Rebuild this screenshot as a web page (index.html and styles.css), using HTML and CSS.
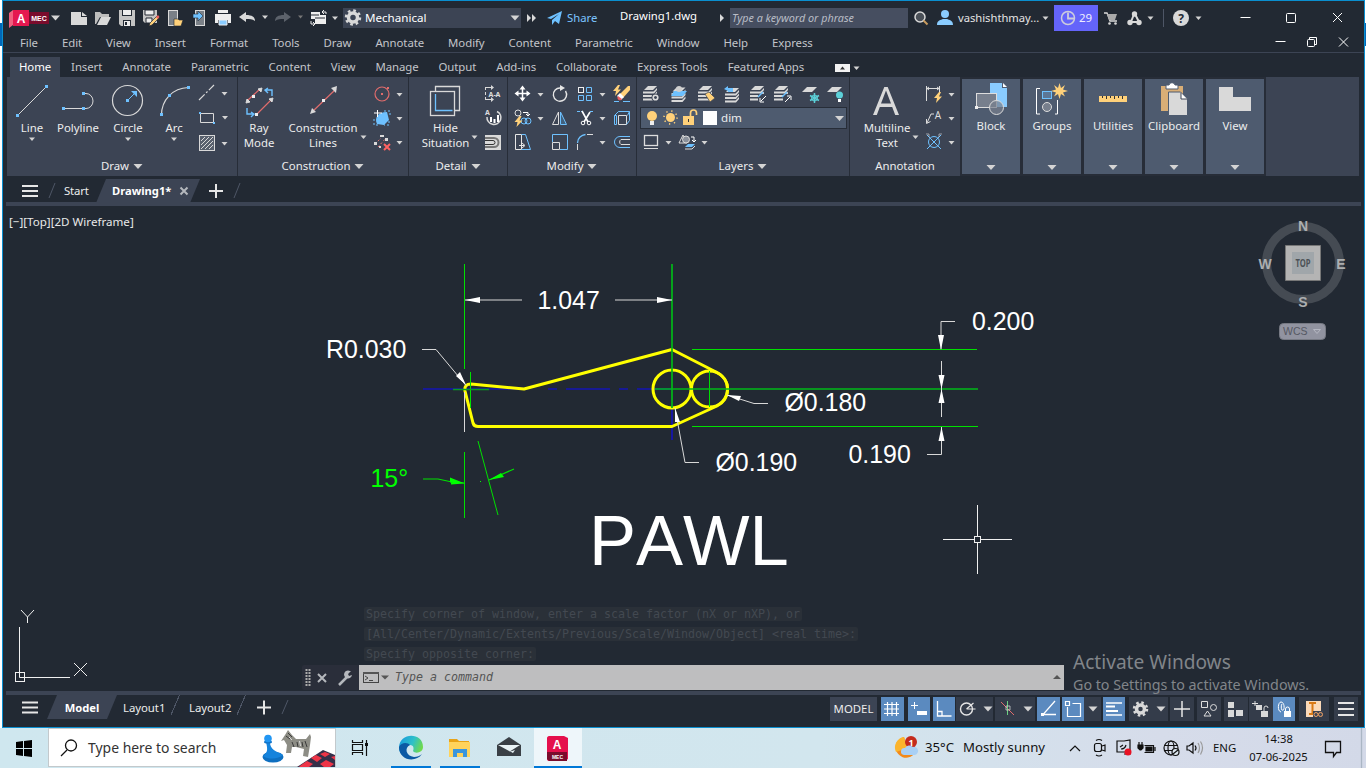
FILE: index.html
```html
<!DOCTYPE html>
<html lang="en">
<head>
<meta charset="utf-8">
<title>Drawing1.dwg</title>
<link rel="stylesheet" href="styles.css">
</head>
<body>
<svg class="defs" width="0" height="0">
  <defs>
    <path id="t" d="M-3-1.5h6L0 2z" fill="#d4d4d4"/>
    <path id="T" d="M-4.5-2h9L0 3z" fill="#d4d4d4"/>
    <path id="layers" d="M5 0h9l-4 4H1zM0 5.500h10.500L14 2v2l-3 3.500H0zM0 9h10.500L14 5.500v2L11 11H0zM0 12.500h10.500L14 9v2l-3 3.500H0z" fill="#d9d9d9"/>
    <path id="sheet" d="M5 0h10l-5 5H0z" fill="#d9d9d9"/>
    <path id="bolt" d="M5 0L0 6h3L2 11l6-6.500H5L7 0z" fill="#ffd17a"/>
  </defs>
</svg>
<div class="window">
  <header class="titlebar">
    <svg width="56" height="33" viewBox="6 1 56 33"><path d="M9 13l4-3v15l-4 3z" fill="#f0607f"/><path d="M13 10h16v16H13z" fill="#e5184f"/><path d="M29 12h20v12H29z" fill="#7a0c2c"/><text x="21" y="22.500" class="logo-a">A</text><text x="39" y="21" class="logo-m">MEC</text><use href="#T" x="55.500" y="17.500"/></svg>
    <svg width="29" height="33" viewBox="62 1 29 33"><path d="M71 12h10v5h6v8H71zM82 12l5 4h-5z" fill="#d9d9d9"/></svg>
    <svg width="24" height="33" viewBox="91 1 24 33"><path d="M95 12h5l2 2h7v3h-9l-4 7h-1z" fill="#bdbdbd"/><path d="M101 17h10l-4 8H97z" fill="#d9d9d9"/></svg>
    <svg width="24" height="33" viewBox="115 1 24 33"><path d="M119 10h16v16h-14l-2-2z" fill="#c4c4c4"/><path d="M122 10h10v6h-10zM123 20h8v6h-8z" fill="#222933"/><path d="M123 10h8v5h-8zM124 21h6v5h-6z" fill="#eee"/><path d="M125 22h2v3h-2z" fill="#222933"/></svg>
    <svg width="24" height="33" viewBox="139 1 24 33"><path d="M143 10h14v13h-12l-2-2z" fill="#c4c4c4"/><path d="M145 10h9v5h-9zM146 18h6v5h-6z" fill="#eee" stroke="#222933"/><path d="M157 16l2 2-7 7-3 1 1-3z" fill="#ffd17a" stroke="#222933" stroke-width=".7"/><path d="M156 17l2-2 1.500 2-2 2z" fill="#f06060"/></svg>
    <svg width="25" height="33" viewBox="163 1 25 33"><rect x="168.500" y="10.500" width="9" height="15" fill="#7a8087" stroke="#d9d9d9"/><path d="M174 19h4l1 1h4l-2 6h-7z" fill="#ffd17a" stroke="#222933" stroke-width=".6"/></svg>
    <svg width="23" height="33" viewBox="188 1 23 33"><rect x="195.500" y="10.500" width="9" height="15" fill="#7a8087" stroke="#d9d9d9"/><path d="M193 14h5v-3l5 5-5 5v-3h-5z" fill="#6ec1ff" stroke="#222933" stroke-width=".6"/></svg>
    <svg width="24" height="33" viewBox="211 1 24 33"><path d="M218 10h10v3h-10zM215 14h16v9h-3v-3h-10v3h-3z" fill="#eee"/><path d="M219 20h8v5h-8z" fill="#8accff" stroke="#eee"/></svg>
    <svg width="36" height="33" viewBox="235 1 36 33"><path d="M239 17l7-5v3c6 0 9 2 9 6-3-2-5-2-9-2v3z" fill="#d9d9d9"/><use href="#t" x="265" y="17"/></svg>
    <svg width="36" height="33" viewBox="271 1 36 33"><path d="M291 17l-7-5v3c-6 0-9 2-9 6 3-2 5-2 9-2v3z" fill="#5c626b"/><path d="M298 15.500h5l-2.500 3z" fill="#777"/></svg>
    <svg width="36" height="33" viewBox="307 1 36 33"><path d="M311 12h9v3h6v9h-11v-5h-4z" fill="#eee"/><path d="M315 18h10M311 15h8" stroke="#222933"/><path d="M322 12h4v2M324 10l-2 2 2 2M311 21v3h3M313 22l2 2-2 2" fill="none" stroke="#eee"/><use href="#t" x="335" y="18"/></svg>
    <div class="workspace"><svg width="22" height="20" viewBox="343 8 22 20"><circle cx="353" cy="17.500" r="4.500" fill="none" stroke="#d9d9d9" stroke-width="3.500"/><circle cx="353" cy="17.500" r="7" fill="none" stroke="#d9d9d9" stroke-width="2.500" stroke-dasharray="2.700 2.798"/></svg><span>Mechanical</span><svg width="12" height="20" viewBox="510 8 12 20"><use href="#T" x="516" y="17.500"/></svg></div>
    <svg width="22" height="33" viewBox="521 1 22 33"><path d="M527 14l4 4-4 4zM532 14l4 4-4 4z" fill="#d9d9d9"/></svg>
    <svg width="24" height="33" viewBox="543 1 24 33"><path d="M547 18l15-7-3 13-4-3-3 4v-5l7-6-8 5z" fill="#6ec1ff"/></svg>
    <span class="share">Share</span>
    <span class="doc-title">Drawing1.dwg</span>
    <svg width="34" height="33" viewBox="696 1 34 33"><path d="M720 14l4 4-4 4z" fill="#d9d9d9"/></svg>
    <div class="search">Type a keyword or phrase</div>
    <svg width="24" height="33" viewBox="908 1 24 33"><circle cx="920" cy="17" r="5" fill="#4a5058" stroke="#d9d9d9" stroke-width="1.500"/><path d="M923.500 20.500l4 4" stroke="#c89b5e" stroke-width="2"/></svg>
    <svg width="26" height="33" viewBox="932 1 26 33"><circle cx="945" cy="14" r="4" fill="#8accff"/><path d="M937 25c0-5 4-5 6-6h4c2 1 6 1 6 6z" fill="#8accff"/></svg>
    <span class="user">vashishthmay...</span>
    <svg width="14" height="33" viewBox="1040 1 14 33"><use href="#t" x="1045.500" y="18"/></svg>
    <div class="trial"><svg width="22" height="26" viewBox="1054 5 22 26"><path d="M1068 12.500v6h6" fill="none" stroke="#ccd" stroke-width="1.800"/><circle cx="1068" cy="18" r="6.500" fill="none" stroke="#ccd" stroke-width="1.500"/></svg><span>29</span></div>
    <svg width="26" height="33" viewBox="1098 1 26 33"><path d="M1104 13h3l3 8h7" fill="none" stroke="#d9d9d9" stroke-width="1.300"/><path d="M1107 14h10l-2 6h-6z" fill="#aaa"/><circle cx="1109.500" cy="23.500" r="1.300" fill="#d9d9d9"/><circle cx="1115.500" cy="23.500" r="1.300" fill="#d9d9d9"/></svg>
    <svg width="36" height="33" viewBox="1124 1 36 33"><path d="M1134.500 13l-4 10M1134.500 13l5 10M1130 22h9" stroke="#d9d9d9" stroke-width="2"/><circle cx="1134.500" cy="14" r="2.700" fill="#d9d9d9"/><circle cx="1130" cy="22.500" r="2.700" fill="#d9d9d9"/><circle cx="1139" cy="22.500" r="2.700" fill="#d9d9d9"/><use href="#t" x="1150.500" y="18"/></svg>
    <svg width="50" height="33" viewBox="1160 1 50 33"><path d="M1163.500 9v18" stroke="#4e5666"/><circle cx="1181" cy="18" r="8" fill="#d9d9d9"/><text x="1181" y="22.500" class="help">?</text><use href="#t" x="1198.500" y="18"/></svg>
    <svg class="end winbtns" width="120" height="33" viewBox="1240 1 120 33" fill="none" stroke="#fff"><path d="M1240.500 17.500h10M1333 13l9 9M1342 13l-9 9"/><rect x="1286.500" y="13.500" width="9" height="9" rx="1"/></svg>
  </header>
  <nav class="menubar">
    <span>File</span><span>Edit</span><span>View</span><span>Insert</span><span>Format</span><span>Tools</span><span>Draw</span><span>Annotate</span><span>Modify</span><span>Content</span><span>Parametric</span><span>Window</span><span>Help</span><span>Express</span>
    <svg class="end winbtns" width="90" height="18" viewBox="1270 34 90 18" fill="none" stroke="#fff"><path d="M1275.500 41.500h10M1339 37.500l9 9M1348 37.500l-9 9M1309.500 39v-1.500h7v7h-1.500"/><rect x="1307.500" y="39.500" width="7" height="7" rx="1"/></svg>
  </nav>
  <nav class="tabs">
    <span class="on">Home</span><span>Insert</span><span>Annotate</span><span>Parametric</span><span>Content</span><span>View</span><span>Manage</span><span>Output</span><span>Add-ins</span><span>Collaborate</span><span>Express Tools</span><span>Featured Apps</span>
    <svg width="30" height="20" viewBox="832 57 30 20"><path d="M835 64h15v8h-15z" fill="#f2f2f2"/><path d="M840 69.500h5l-2.500-3z" fill="#333"/><use href="#t" x="856.500" y="68"/></svg>
  </nav>
  <section class="ribbon">
    <div class="panel p-draw">
      <div class="body">
        <div class="big line"><svg width="50" height="43" viewBox="7 77 50 43"><path d="M18 115l29-29" stroke="#d9d9d9"/><path d="M45 85h3v3h-3zM16 114h3v3h-3z" fill="#6ec1ff"/></svg>Line<svg width="8" height="8" viewBox="-4 -4 8 8"><use href="#t"/></svg></div>
        <div class="big poly"><svg width="42" height="43" viewBox="57 77 42 43"><path d="M64 108.500h19M84 93.500h2a7 7.500 0 010 15h-2" fill="none" stroke="#d9d9d9"/><path d="M62 107h3v3h-3zM82 107h3v3h-3zM82 92h3v3h-3z" fill="#6ec1ff"/></svg>Polyline</div>
        <div class="big circ"><svg width="58" height="43" viewBox="99 77 58 43"><circle cx="127.500" cy="100.500" r="15" fill="none" stroke="#d9d9d9" stroke-width="1.200"/><path d="M126 99h3v3h-3zM131 91h6v6z" fill="#6ec1ff"/><path d="M128 100l7-7" stroke="#6ec1ff"/></svg>Circle<svg width="8" height="8" viewBox="-4 -4 8 8"><use href="#t"/></svg></div>
        <div class="big arc"><svg width="34" height="43" viewBox="157 77 34 43"><path d="M161.500 115c0-15 11-27 27-27.500" fill="none" stroke="#d9d9d9" stroke-width="1.200"/><path d="M187 86h3v3h-3zM168 94h3v3h-3zM160 113h3v3h-3z" fill="#6ec1ff"/></svg>Arc<svg width="8" height="8" viewBox="-4 -4 8 8"><use href="#t"/></svg></div>
        <div class="tools">
          <svg width="40" height="24" viewBox="195 82 40 24"><path d="M199 100l15-15" stroke="#d9d9d9" stroke-width="1.200" stroke-dasharray="8 2 2 2"/><use href="#t" x="224.500" y="93.500"/></svg>
          <svg width="40" height="24" viewBox="195 106 40 24"><path d="M200.500 113.500h13v9h-13z" fill="none" stroke="#d9d9d9"/><path d="M199 112h2v2h-2zM213 122h2v2h-2z" fill="#6ec1ff"/><use href="#t" x="225" y="117.500"/></svg>
          <svg width="40" height="24" viewBox="195 130 40 24"><rect x="199.500" y="135.500" width="15" height="15" fill="#59616e" stroke="#d9d9d9"/><path d="M201 141l4-4M201 145l8-8M201 149l12-12M205 149l8-8M209 149l4-4" stroke="#d9d9d9"/><use href="#t" x="224.500" y="143.500"/></svg>
        </div>
      </div>
      <div class="name">Draw<svg width="14" height="8" viewBox="-9 -4 14 8"><use href="#T"/></svg></div>
    </div>
    <div class="panel p-cons">
      <div class="body">
        <div class="big ray"><svg width="42" height="43" viewBox="238 77 42 43"><path d="M248 100l12-11M257 114l14-14" stroke="#e06c6c" stroke-width="1.200"/><path d="M246 103l1-4 3 3zM262 88l-4 1 3 3zM273 98l-4 1 3 3z" fill="#d9d9d9" stroke="#d9d9d9"/><path d="M252 95h3v3h-3zM255 113h3v3h-3z" fill="#eee"/><path d="M272 96v-6h-6M268 88l-3 2 3 3M247 108v6h6M251 112l3 2-3 3" fill="none" stroke="#6ec1ff" stroke-width="1.400"/></svg><span>Ray<br>Mode</span></div>
        <div class="big cline"><svg width="74" height="43" viewBox="286 77 74 43"><path d="M312 112l24-23" stroke="#e06c6c" stroke-width="1.200"/><path d="M337 86l-6 2 5 5zM310 114l2-6 4 4z" fill="#d9d9d9"/><path d="M322 99h3v3h-3z" fill="#eee"/></svg><span>Construction<br>Lines</span></div>
        <svg width="7" height="80" viewBox="360 77 7 80"><use href="#t" x="363.500" y="137"/></svg>
        <div class="tools">
          <svg width="40" height="24" viewBox="367 82 40 24"><circle cx="382" cy="94" r="7" fill="none" stroke="#e06c6c" stroke-width="1.200"/><path d="M381 93h2v2h-2zM387 87h2v2h-2z" fill="#e06c6c"/><use href="#t" x="399.500" y="94.500"/></svg>
          <svg width="40" height="24" viewBox="367 106 40 24"><path d="M377 124c-3-6 1-12 10-12l2 8-5 5z" fill="#6ec1ff"/><path d="M374 113h8M377.500 110v7" stroke="#fff"/><path d="M384 111h6v5M374 119v6h4M389 121v4h-5" stroke="#6ec1ff" fill="none" stroke-dasharray="2 2"/><use href="#t" x="399.500" y="118.500"/></svg>
          <svg width="40" height="24" viewBox="367 130 40 24"><path d="M375 144l6-6M378 147l8-9" stroke="#e06c6c" stroke-dasharray="2 2"/><path d="M380 135h4v2h-4zM374 142h3v3h-3zM385 138h3v3h-3zM379 146h2v2h-2z" fill="#d9d9d9"/><path d="M384 144l6 6M390 144l-6 6" stroke="#ff6262" stroke-width="2"/><use href="#t" x="399.500" y="142.500"/></svg>
        </div>
      </div>
      <div class="name">Construction<svg width="14" height="8" viewBox="-9 -4 14 8"><use href="#T"/></svg></div>
    </div>
    <div class="panel p-det">
      <div class="body">
        <div class="big hide"><svg width="53" height="43" viewBox="419 77 53 43"><path d="M435.500 91v-4.500h24v24H455" fill="none" stroke="#d9d9d9" stroke-width="1.300"/><rect x="430.500" y="91.500" width="24" height="24" fill="none" stroke="#d9d9d9" stroke-width="1.300"/><path d="M435.500 94v16.500h17" fill="none" stroke="#6ec1ff" stroke-width="1.300"/></svg><span>Hide<br>Situation</span></div>
        <svg width="9" height="80" viewBox="471 77 9 80"><use href="#t" x="474.500" y="137"/></svg>
        <div class="tools">
          <svg width="26" height="24" viewBox="480 82 26 24"><path d="M485.500 87v13" stroke="#d9d9d9" stroke-dasharray="3 2"/><path d="M485 87.500h6M485 99.500h6" stroke="#d9d9d9"/><path d="M491 85l3 2.500-3 2.500zM491 97l3 2.500-3 2.500z" fill="#d9d9d9"/><text x="494.500" y="96.500" class="ic7 mid">A-A</text></svg>
          <svg width="26" height="24" viewBox="480 106 26 24"><path d="M487 117a7 6.800 0 1010-5.500" fill="none" stroke="#d9d9d9" stroke-width="1.500"/><path d="M490 117h2v5h-2zM493.500 119h2v4h-2zM497 115h2v7h-2z" fill="#fff"/><text x="485" y="115" class="ic7">A</text></svg>
          <svg width="26" height="24" viewBox="480 130 26 24"><path d="M485 135h16v15h-16z" fill="#d9d9d9"/><path d="M485 138h9a4 4 0 010 9h-9" fill="none" stroke="#777" stroke-width="2"/><path d="M485 140.500h8a2 2 0 010 4h-8" fill="none" stroke="#333"/></svg>
        </div>
      </div>
      <div class="name">Detail<svg width="14" height="8" viewBox="-9 -4 14 8"><use href="#T"/></svg></div>
    </div>
    <div class="panel p-mod">
      <div class="body">
        <div class="modgrid">
          <svg width="36" height="24" viewBox="510 82 36 24"><path d="M516 93.500h13M522.500 87v13" stroke="#fff" stroke-width="1.500"/><path d="M522.500 85.500l3 4h-6zM522.500 101.500l3-4h-6zM514.500 93.500l4-3v6zM530.500 93.500l-4-3v6z" fill="#fff"/><use href="#t" x="540.500" y="94.500"/></svg>
          <svg width="27" height="24" viewBox="546 82 27 24"><path d="M565.500 91a6.600 6.600 0 11-5-3" fill="none" stroke="#e6e6e6" stroke-width="1.400"/><path d="M560 85l5 3-5 3z" fill="#e6e6e6"/></svg>
          <svg width="36" height="24" viewBox="573 82 36 24" fill="none"><rect x="578.500" y="87.500" width="5" height="5" stroke="#eee"/><path d="M586.500 87.500h5v5h-5zM578.500 95.500h5v5h-5zM586.500 95.500h5v5h-5z" stroke="#6ec1ff"/><use href="#t" x="602.500" y="94.500"/></svg>
          <svg width="26" height="24" viewBox="609 82 26 24"><path d="M630 86v4l-7 8-4-3 9-9z" fill="#ffd17a"/><path d="M620 93l4 4-3 3-4-4z" fill="#fff"/><path d="M618 96l4 3c-2 3-6 0-4-3z" fill="#f06060"/><path d="M614 101.500h5M623 101.500h7" stroke="#6ec1ff"/><use href="#bolt" x="613" y="85"/></svg>
          <svg width="36" height="24" viewBox="510 106 36 24" fill="none"><circle cx="518" cy="113" r="3" stroke="#ddd"/><path d="M523 112.500h5v3M526 114l2 2 2-2" stroke="#fff"/><circle cx="524" cy="121" r="3" stroke="#6ec1ff"/><circle cx="528" cy="121" r="3" stroke="#6ec1ff"/><use href="#bolt" x="514.500" y="116"/><use href="#t" x="540.500" y="118.500"/></svg>
          <svg width="27" height="24" viewBox="546 106 27 24" fill="none"><path d="M558.500 112v12.500h-6z" stroke="#ddd"/><path d="M560.500 112v12.500h6z" stroke="#6ec1ff" fill="#41617e"/></svg>
          <svg width="36" height="24" viewBox="573 106 36 24" fill="none"><path d="M577 111.500h5M590 111.500h4" stroke="#6ec1ff" stroke-dasharray="3 1"/><path d="M582 111l6 11M590 112l-6 10" stroke="#fff" stroke-width="1.600"/><circle cx="583" cy="123" r="1.800" stroke="#fff"/><circle cx="589" cy="123" r="1.800" stroke="#fff"/><use href="#t" x="602.500" y="118.500"/></svg>
          <svg width="26" height="24" viewBox="609 106 26 24" fill="none"><path d="M618.500 115.500h8v9h-8z" stroke="#ddd"/><path d="M614.500 115.500v9h2v-9zM614.500 115.500l4-4h11v9l-3 4M627.500 115.500l2-4" stroke="#6ec1ff"/></svg>
          <svg width="36" height="24" viewBox="510 130 36 24" fill="none"><path d="M515.500 134.500h6v15h-6zM519 145.500h5M522 143l3 2.500-3 2.500" stroke="#e6e6e6"/><path d="M521.500 134.500h4l5 15h-9" stroke="#6ec1ff"/></svg>
          <svg width="27" height="24" viewBox="546 130 27 24" fill="none"><path d="M552.500 142v-7.500h15v15H560" stroke="#6ec1ff"/><path d="M552.500 142.500h7v7h-7z" stroke="#ddd"/></svg>
          <svg width="36" height="24" viewBox="573 130 36 24" fill="none"><path d="M577.500 143c0-5 4-8 8-8.500" stroke="#6ec1ff" stroke-width="1.300"/><path d="M587 134.500h6M577.500 144v6" stroke="#ddd"/><use href="#t" x="602.500" y="142.500"/></svg>
          <svg width="26" height="24" viewBox="609 130 26 24" fill="none"><path d="M630 136.500h-10a5.500 5.500 0 000 11h10" stroke="#6ec1ff"/><path d="M630 139.500h-9a3 3 0 000 5h9" stroke="#ddd"/></svg>
        </div>
      </div>
      <div class="name">Modify<svg width="14" height="8" viewBox="-9 -4 14 8"><use href="#T"/></svg></div>
    </div>
    <div class="panel p-lay">
      <div class="body stack">
        <div class="row">
          <svg width="27" height="25" viewBox="639 82 27 25"><use href="#layers" x="643" y="86"/><circle cx="655.500" cy="97.500" r="4" fill="#3c4454"/><circle cx="655.500" cy="97.500" r="2.300" fill="none" stroke="#ddd" stroke-width="1.600"/></svg>
          <svg width="27" height="25" viewBox="666 82 27 25"><use href="#layers" x="671.500" y="87.500"/><path d="M674 91h13l-4 5h-12z" fill="#6ec1ff"/><circle cx="679" cy="89" r="3" fill="#cfcfcf"/></svg>
          <svg width="27" height="25" viewBox="693 82 27 25"><use href="#layers" x="698" y="86"/><path d="M705 94l4-2 6 6-5 4z" fill="#ffd17a" stroke="#3c4454" stroke-width=".7"/></svg>
          <svg width="25" height="25" viewBox="720 82 25 25"><use href="#layers" x="725" y="88"/><path d="M724 89l4-3v2h5v4h-5v-1z" fill="#6ec1ff"/></svg>
          <svg width="26" height="25" viewBox="745 82 26 25"><use href="#layers" x="750" y="86"/><path d="M758 94h9v9h-9z" fill="#3c4454"/><path d="M758 97l5-5" stroke="#6ec1ff" stroke-width="1.500"/><path d="M766 96l-5 5M760 98v4h4" fill="none" stroke="#fff"/></svg>
          <svg width="25" height="25" viewBox="771 82 25 25"><use href="#layers" x="774" y="86"/><path d="M783 94h9v9h-9z" fill="#3c4454"/><path d="M782 97l5-5" stroke="#6ec1ff" stroke-width="1.500"/><path d="M785 102l5-5M787 96h4v4" fill="none" stroke="#fff"/></svg>
          <svg width="27" height="25" viewBox="796 82 27 25"><use href="#sheet" x="802" y="87"/><path d="M814.500 93v10M810 95.500l9 5M819 95.500l-9 5" stroke="#5cd0d8" stroke-width="1.500"/><circle cx="814.500" cy="98" r="3" fill="none" stroke="#5cd0d8"/></svg>
          <svg width="25" height="25" viewBox="823 82 25 25"><use href="#sheet" x="827" y="87"/><circle cx="839.500" cy="95" r="3.500" fill="#5cd0d8"/><path d="M838 99h3v3h-3z" fill="#fff"/></svg>
        </div>
        <div class="combo">
          <svg width="78" height="20" viewBox="640 108 78 20"><circle cx="651" cy="116" r="5" fill="#ffd17a"/><path d="M649 121h4v4h-4z" fill="#eee"/><circle cx="669.500" cy="117.500" r="4.500" fill="#ffd17a"/><circle cx="669.500" cy="117.500" r="6.500" fill="none" stroke="#ffd17a" stroke-width="1.500" stroke-dasharray="1.300 3.800"/><path d="M682 116h11v9h-11z" fill="#ffd17a"/><path d="M689.500 116v-3a3 3 0 016 0v2" fill="none" stroke="#ffd17a" stroke-width="1.700"/><path d="M687 119h1v3h-1z" fill="#333"/><path d="M702 111h14v14h-14z" fill="#fff"/></svg>
          <span>dim</span>
          <svg class="end" width="12" height="20" viewBox="835 108 12 20"><use href="#T" x="840.500" y="118"/></svg>
        </div>
        <div class="row">
          <svg width="36" height="24" viewBox="639 130 36 24"><rect x="644.500" y="135.500" width="13" height="10" fill="none" stroke="#ddd" stroke-width="1.300"/><path d="M644 148.500h14" stroke="#ddd"/><use href="#t" x="668.500" y="142.500"/></svg>
          <svg width="36" height="24" viewBox="675 130 36 24"><path d="M679 143l4-8 4 8z" fill="none" stroke="#ddd"/><circle cx="686" cy="139.500" r="3.500" fill="#8b919b" stroke="#ddd"/><path d="M691 137h3v4M692 140l2 2 2-2" fill="none" stroke="#fff"/><path d="M688 144h7l-3 3h-7z" fill="#6ec1ff"/><path d="M685 149h7l3-3" fill="none" stroke="#ddd"/><use href="#t" x="704.500" y="142.500"/></svg>
        </div>
      </div>
      <div class="name">Layers<svg width="14" height="8" viewBox="-9 -4 14 8"><use href="#T"/></svg></div>
    </div>
    <div class="panel p-ann">
      <div class="body">
        <div class="big mtext"><svg width="54" height="43" viewBox="860 77 54 43"><path d="M873 115l11.300-28h3.400L899 115h-3.800l-3-8h-12.400l-3 8zM881 103.500h10L886 90.500z" fill="#d9d9d9" fill-rule="evenodd"/></svg><span>Multiline<br>Text</span></div>
        <svg width="8" height="80" viewBox="912 77 8 80"><use href="#t" x="915.500" y="137"/></svg>
        <div class="tools">
          <svg width="38" height="24" viewBox="920 82 38 24"><path d="M926.500 86v15M939.500 86v6M926 88.500h13M929 87l-2 1.500 2 1.500M937 87l2 1.500-2 1.500" fill="none" stroke="#ddd"/><use href="#bolt" x="934" y="92"/><use href="#t" x="951.500" y="94.500"/></svg>
          <svg width="38" height="24" viewBox="920 106 38 24"><path d="M927 123l4-9h3M926.500 119v4.500l4-2" fill="none" stroke="#ddd"/><text x="938" y="119" class="ic9">A</text><use href="#t" x="951.500" y="118.500"/></svg>
          <svg width="38" height="24" viewBox="920 130 38 24"><circle cx="934" cy="142" r="5.500" fill="none" stroke="#6ec1ff"/><path d="M927 135l14 14M941 135l-14 14" stroke="#6ec1ff"/><path d="M926 134h3v3M942 134h-3v3" fill="none" stroke="#ddd" stroke-width=".6"/><use href="#t" x="951.500" y="142.500"/></svg>
        </div>
      </div>
      <div class="name">Annotation</div>
    </div>
    <div class="collapsed">
      <div class="chip"><svg width="58" height="39" viewBox="962 79 58 39"><path d="M990 83h12v5h5v19h-17z" fill="#8accff"/><path d="M1003 83l4 4h-4z" fill="#fff"/><rect x="976.500" y="93.500" width="20" height="14" fill="#777f8d" stroke="#ddd"/><circle cx="996.500" cy="107.500" r="7" fill="#777f8d" fill-opacity=".7" stroke="#ddd"/><path d="M975 106h3v3h-3z" fill="#eee"/></svg><span>Block</span><svg width="12" height="8" viewBox="-6 -4 12 8"><use href="#T" y="-1"/></svg></div>
      <div class="chip"><svg width="58" height="39" viewBox="1023 79 58 39"><path d="M1040 88.500h-3.500v25.500h3.500M1055 114h2.500v-14" fill="none" stroke="#fff"/><rect x="1042.500" y="91.500" width="9" height="7" fill="#5c7696" stroke="#6ec1ff"/><circle cx="1047" cy="107" r="4.500" fill="#777f8d" stroke="#ddd"/><path d="M1059.500 83l1.500 5 4-3-2 4.500 5 1.500-5 1.500 2 4-4-2.500-1.500 5-1.500-5-4 2.500 2-4-5-1.500 5-1.500-2-4.500 4 3z" fill="#ffd17a"/></svg><span>Groups</span><svg width="12" height="8" viewBox="-6 -4 12 8"><use href="#T" y="-1"/></svg></div>
      <div class="chip"><svg width="58" height="39" viewBox="1084 79 58 39"><path d="M1099 96h28v6h-28z" fill="#ffd17a"/><path d="M1102.500 96v2M1106.500 96v3M1110.500 96v2M1114.500 96v3M1118.500 96v2M1122.500 96v3" stroke="#333"/></svg><span>Utilities</span><svg width="12" height="8" viewBox="-6 -4 12 8"><use href="#T" y="-1"/></svg></div>
      <div class="chip"><svg width="58" height="39" viewBox="1145 79 58 39"><path d="M1161 86h22v25h-22z" fill="#d9ae76"/><path d="M1166 89v-4h3c1-3 5-3 6 0h3v4z" fill="#fff" stroke="#4e5b6f"/><path d="M1168.500 92h12l7 7v16.500h-19z" fill="#d9d9d9" stroke="#4e5b6f"/><path d="M1181 93v6h6" fill="#fff" stroke="#3c4454"/></svg><span>Clipboard</span><svg width="12" height="8" viewBox="-6 -4 12 8"><use href="#T" y="-1"/></svg></div>
      <div class="chip"><svg width="58" height="39" viewBox="1206 79 58 39"><path d="M1219 87h14v10h18v14h-32z" fill="#d9d9d9"/></svg><span>View</span><svg width="12" height="8" viewBox="-6 -4 12 8"><use href="#T" y="-1"/></svg></div>
    </div>
  </section>
  <nav class="filetabs">
    <svg width="61" height="27" viewBox="3 176 61 27"><path d="M22 186h16M22 191h16M22 196h16" stroke="#e6e6e6" stroke-width="2"/><path d="M49 198l6-15" stroke="#4e5666"/></svg>
    <span>Start</span>
    <div class="filetab"><b>Drawing1*</b><svg width="14" height="24" viewBox="177 179 14 24"><path d="M180.500 187.500l7 7M187.500 187.500l-7 7" stroke="#b5b8bd" stroke-width="2"/></svg></div>
    <svg width="50" height="27" viewBox="200 176 50 27"><path d="M209 191h14M216 184v14" stroke="#e6e6e6" stroke-width="2"/><path d="M234 198l6-15" stroke="#4e5666"/></svg>
  </nav>
  <main class="canvas">
    <svg class="drawing" width="1361" height="485" viewBox="3 206 1361 485">
      <g fill="none" stroke="#1414b4" stroke-width="1.700"><path d="M423 389h42M465 389h54M548 389h9M566 389h44M619 389h9M637 389h35M672 408v32"/></g>
      <g fill="none" stroke="#ff0" stroke-width="3" stroke-linejoin="round"><path d="M672 349.500L717 372.500A18.500 18.500 0 01717 406L672 426.500H478Q474 426.500 473 423L465 391Q464 384 471 384L524 389z"/><circle cx="672" cy="389" r="19"/><circle cx="709.500" cy="389" r="18"/></g>
      <g fill="none" stroke="#00e000"><path d="M464.500 264v105M464.500 452v66M478 441l20 74M470.500 372v36M709.500 371v36M692 349.500h285M692 426.500h286"/><path d="M672 264v144M655 389h323" stroke="#00b818" stroke-width="1.700"/><path d="M453 389.500h36" stroke="#0a9a20" stroke-width="1.500"/><path d="M423 479h15l14 3 13 1M514 469l-25 11" stroke-width="1.200"/></g>
      <g fill="#0f0"><path d="M465 483.500l-15-6v5zM489 480l12-7 3 4zM480 481h1v1h-1zM451 478.500v6l13-1z"/></g>
      <g fill="none" stroke="#d8d8d8"><path d="M465 300h57M615 300h57M422 349.500h14l30 36M464.500 392v40M955 321.500h-14V349M941.500 361v28M941.500 389v28M941.500 427v27.500H927M727 395l27 8.500h14M675 408l10 54.500h14"/></g>
      <path fill="#fff" d="M465 300l15-3v6zM672 300l-15-3v6zM466 385l-10-9 4-4zM941 350l-3-15h6zM941.500 389l-3-14h6zM941.500 389l-3 14h6zM941.500 427l-3 14h6zM727 395l14 1-2 5zM675 408l0 14h5z"/>
      <g class="dim"><text x="537.500" y="308.500">1.047</text><text x="326" y="358">R0.030</text><text x="972" y="330">0.200</text><text x="784.500" y="411">Ø0.180</text><text x="715.500" y="471">Ø0.190</text><text x="848.500" y="463">0.190</text><text x="370.500" y="487" class="green">15°</text><text x="589" y="565" class="title">PAWL</text></g>
      <g fill="none" stroke="#f0f0f0"><path d="M943 539.500h31M981 539.500h31M977.500 505v31M977.500 543v31"/><rect x="974.500" y="536.500" width="6" height="6"/><rect x="15.500" y="672.500" width="9" height="9"/><path d="M19.500 627v50.500H70M21 610l6.500 7 6.500-7M27.500 617v6M74 663l13 13M87 663l-13 13"/></g>
      <circle cx="1303" cy="263" r="36.500" fill="none" stroke="#454b53" stroke-width="9"/>
      <path d="M1285.500 245.500h35v35h-35z" fill="#b4b4b4" stroke="#777"/><path d="M1292 252h22v22h-22z" fill="#a0a6aa"/>
      <g class="cube"><text x="1303" y="230.500">N</text><text x="1303" y="306.500">S</text><text x="1265" y="268.500">W</text><text x="1341" y="268.500">E</text></g>
      <text x="1303" y="267" class="top" textLength="15" lengthAdjust="spacingAndGlyphs">TOP</text>
      <rect x="1279.500" y="323.500" width="46" height="16" rx="4" fill="#9193a0" stroke="#777a84"/><text x="1283" y="334.500" class="wcs">WCS</text><path d="M1313.500 329.500h7l-3.500 4z" fill="none" stroke="#b5b7c2"/>
    </svg>
    <span class="viewlabel">[−][Top][2D Wireframe]</span>
    <div class="cmd">
      <div class="history"><span>Specify corner of window, enter a scale factor (nX or nXP), or</span><span>[All/Center/Dynamic/Extents/Previous/Scale/Window/Object] &lt;real time&gt;:</span><span>Specify opposite corner:</span></div>
      <div class="cmdrow">
        <svg class="cmdtools" width="57" height="25" viewBox="302 665 57 25"><path d="M306.500 669v17M309.500 669v17" stroke="#aaa" stroke-width="2" stroke-dasharray="2 1"/><path d="M318 674l8 8M326 674l-8 8" stroke="#b5b8bd" stroke-width="2"/><path d="M339 685l8-8" stroke="#b5b8bd" stroke-width="2.500"/><path d="M351 671l-3 3 1 2 3-1a4 4 0 11-2-4z" fill="#b5b8bd"/></svg>
        <div class="cmdinput"><svg width="32" height="25" viewBox="359 665 32 25"><rect x="363.500" y="672.500" width="15" height="10" fill="none" stroke="#444"/><path d="M363 672h16v2h-16z" fill="#555"/><path d="M365 676l3 2-3 2M369 680.500h4" fill="none" stroke="#444"/><path d="M381 675.500h8l-4 4z" fill="#555"/></svg><i>Type a command</i><svg class="end" width="14" height="25" viewBox="1050 665 14 25"><path d="M1053 679h8l-4-4z" fill="#555"/></svg></div>
      </div>
    </div>
    <div class="activate"><div>Activate Windows</div><p>Go to Settings to activate Windows.</p></div>
  </main>
  <footer class="status">
    <svg width="44" height="32" viewBox="3 695 44 32"><path d="M22 702.500h16M22 707.500h16M22 712.500h16" stroke="#e6e6e6" stroke-width="2"/></svg>
    <b class="model">Model</b><span class="lay">Layout1</span><span class="lay last">Layout2</span>
    <svg width="46" height="32" viewBox="246 695 46 32"><path d="M257 707.500h14M264 700.500v14" stroke="#e6e6e6" stroke-width="2"/><path d="M282 714l6-14" stroke="#4e5666"/></svg>
    <div class="toggles">
      <span class="mspace">MODEL</span>
      <svg width="26" height="24" viewBox="881 697 26 24"><path class="sel" d="M881 697h23v24h-23z"/><path d="M887.500 702v14M892 702v14M896.500 702v14M884 704.500h15M884 709h15M884 713.500h15" stroke="#fff" stroke-width="1.200"/></svg>
      <svg width="25" height="24" viewBox="907 697 25 24"><path class="sel" d="M908 697h22v24h-22z"/><path d="M911 705.500h7M914.500 702v7" stroke="#fff"/><path d="M917 711h10v4h-10z" fill="#fff"/></svg>
      <svg width="24" height="24" viewBox="932 697 24 24"><path class="sel" d="M933 697h22v24h-22z"/><path d="M937.500 701v15h14M937 711.500h5v5" fill="none" stroke="#fff" stroke-width="1.300"/></svg>
      <svg width="39" height="24" viewBox="956 697 39 24"><path class="off" d="M956 697h37v24h-37z"/><circle cx="966.500" cy="709" r="6" fill="none" stroke="#e6e6e6" stroke-width="1.400"/><path d="M966.500 709h9M966.500 709l7-6" stroke="#e6e6e6" stroke-width="1.200"/><use href="#T" x="988" y="708.500"/></svg>
      <svg width="42" height="24" viewBox="995 697 42 24"><path class="off" d="M995 697h40v24h-40z"/><path d="M1001 702l13 13" stroke="#e06c6c"/><path d="M1007.500 701v14" stroke="#6cd080"/><path d="M1006 706h4v4h-4z" fill="none" stroke="#ddd" stroke-width=".7"/><use href="#T" x="1028" y="708.500"/></svg>
      <svg width="24" height="24" viewBox="1037 697 24 24"><path class="sel" d="M1037 697h23v24h-23z"/><path d="M1055 701l-12 13.500h13" fill="none" stroke="#fff" stroke-width="1.300"/><path d="M1041 713h3v3h-3z" fill="#fff"/></svg>
      <svg width="41" height="24" viewBox="1061 697 41 24"><path class="sel" d="M1062 697h22v24h-22z"/><path class="off" d="M1084 697h17v24h-17z"/><path d="M1067.500 707v9.500h13v-13h-8M1065.500 701.500h4v4h-4z" fill="none" stroke="#fff" stroke-width="1.200"/><use href="#T" x="1093" y="708.500"/></svg>
      <svg width="26" height="24" viewBox="1102 697 26 24"><path class="sel" d="M1103 697h22v24h-22z"/><path d="M1106 703h16M1106 715h16" stroke="#fff" stroke-width="1.500"/><path d="M1106 706.500h9M1106 711h12" stroke="#fff" stroke-width="2.200"/></svg>
      <svg width="41" height="24" viewBox="1128 697 41 24"><path class="off" d="M1129 697h39v24h-39z"/><circle cx="1140.500" cy="709" r="4" fill="none" stroke="#d9d9d9" stroke-width="3.500"/><circle cx="1140.500" cy="709" r="6.500" fill="none" stroke="#d9d9d9" stroke-width="2.500" stroke-dasharray="2.500 2.605"/><use href="#T" x="1161" y="708.500"/></svg>
      <svg width="27" height="24" viewBox="1169 697 27 24"><path class="off" d="M1170 697h24v24h-24z"/><path d="M1174 709h16M1182 701v16" stroke="#e6e6e6" stroke-width="1.500"/></svg>
      <svg width="27" height="24" viewBox="1196 697 27 24"><path class="off" d="M1197 697h24v24h-24z"/><path d="M1201.500 701.500h6v6h-6zM1204 716l3.500-5 3.500 5z" fill="none" stroke="#ddd"/><circle cx="1213.500" cy="707.500" r="3" fill="none" stroke="#ddd"/></svg>
      <svg width="26" height="24" viewBox="1223 697 26 24"><path class="off" d="M1224 697h24v24h-24z"/><path d="M1228 702h6v6h-6zM1228 710h6v7h-6zM1236 710h7v6h-7z" fill="#d9d9d9"/></svg>
      <svg width="24" height="24" viewBox="1249 697 24 24"><path class="off" d="M1249 697h24v24h-24z"/><path d="M1252 703.500h6M1255 701v5" stroke="#ddd"/><path d="M1256 705h6v5h-6zM1261 711h7v6h-7z" fill="#d9d9d9"/><path d="M1264 711v-3a2 2 0 014 0" fill="none" stroke="#ddd"/></svg>
      <svg width="26" height="24" viewBox="1273 697 26 24"><path class="sel" d="M1273 697h22v24h-22z"/><path d="M1281 712c-4-1-3-10 0-10 4 0 4 10 1 8-1-1-1-5 0-6" fill="none" stroke="#fff"/><path d="M1284 711h7v6h-7z" fill="#fff"/><path d="M1285.500 711v-2a2 2 0 014 0v2" fill="none" stroke="#fff"/></svg>
      <svg width="34" height="24" viewBox="1299 697 34 24"><path class="off" d="M1299 697h30v24h-30z"/><path d="M1306 701h15v16h-15z" fill="#fbd9b8"/><path d="M1309 703h7M1312.500 703v11M1309 714h4" stroke="#d97914" stroke-width="2"/><path d="M1313 711h10v6h-10z" fill="#3c4454"/><circle cx="1316" cy="714.500" r="2" fill="none" stroke="#f0a060"/><circle cx="1320.500" cy="714.500" r="2" fill="none" stroke="#f0a060"/></svg>
      <svg width="25" height="24" viewBox="1333 697 25 24"><path class="off" d="M1334 697h24v24h-24z"/><path d="M1338 703h16M1338 709h16M1338 715h16" stroke="#e6e6e6" stroke-width="1.800"/></svg>
    </div>
  </footer>
</div>
<div class="taskbar">
  <svg width="48" height="40" viewBox="0 728 48 40"><path d="M16 742l7-1v7h-7zM24 741l8-1v8h-8zM16 749h7v7l-7-1zM24 749h8v8l-8-1z" fill="#000"/></svg>
  <div class="tsearch"><svg width="39" height="38" viewBox="49 729 39 38"><circle cx="71" cy="745.500" r="5.500" fill="none" stroke="#111" stroke-width="1.300"/><path d="M67 750l-6 6" stroke="#111" stroke-width="1.300"/></svg><span>Type here to search</span>
    <svg class="end" width="76" height="38" viewBox="259 729 76 38"><path d="M297 767l26-17 12 5v12z" fill="#34304a"/><path d="M301 765l6-4 6 3-4 3h-10zM311 758l5-3 6 3-5 4zM320 764l6-4 8 4-4 3h-6zM325 752l5 2-5 3-5-3zM331 757l4-1v4z" fill="#ee3548"/><ellipse cx="273" cy="757" rx="10.500" ry="5.500" fill="#0e6fc0"/><path d="M263 756c6-4 4-9 3-14h4c0 8 6 9 13 13-4 4-14 5-20 1z" fill="#1583dc"/><ellipse cx="268" cy="742" rx="4" ry="1.500" fill="#1073c8"/><circle cx="268" cy="738.500" r="3.800" fill="#2196f3"/><path d="M281 741l4-6 3-5 4 5 4 4h10l4-5 1 3-1 8-2 12-5-1 1-7-8-2h-4l-1 6h-5l1-8-3-5z" fill="#8d8d85"/><path d="M286 736l4 3M292 742l2 5M297 742l1 5M302 742l1 5M288 733l4 4M305 741l2 6" stroke="#3a3a3a"/><path d="M289 737l3 3M299.500 741l1 5" stroke="#ddd"/></svg></div>
  <svg width="48" height="40" viewBox="336 728 48 40" fill="none" stroke="#111" stroke-width="1.200"><path d="M352.500 740v2.500h10V740M352.500 755v-2.500h10v2.500M352.500 744.500h10v6h-10zM366.500 740v3M366.500 746v10"/><path d="M365 743h3v3h-3z" fill="#111" stroke="none"/></svg>
  <svg width="52" height="40" viewBox="384 728 52 40"><defs><linearGradient id="eg" x2="1" y2=".4"><stop stop-color="#1596e0"/><stop offset=".6" stop-color="#2fc0c8"/><stop offset="1" stop-color="#6fd94e"/></linearGradient></defs><path d="M399 748c0-16 24-16 24-1 0 6-8 7-10 4 1-2 1-6-3-6-5 0-8 7-3 12-5-1-8-5-8-9z" fill="url(#eg)"/><path d="M399 747c2-5 9-5 11-2-6 3-4 11 4 12 3 0 6-1 8-3-6 9-23 7-23-7z" fill="#0c59a4"/><path d="M391 766h40v2h-40z" fill="#0078d7"/></svg>
  <svg width="48" height="40" viewBox="436 728 48 40"><path d="M449 739h8l2 2h10v4h-20z" fill="#e8a317"/><path d="M449 742h21v15h-21z" fill="#ffd35c"/><path d="M453 757v-8h14v8h-4v-4h-6v4z" fill="#3a96dd"/><path d="M440 766h40v2h-40z" fill="#0078d7"/></svg>
  <svg width="50" height="40" viewBox="484 728 50 40"><path d="M497 745l12-8 12 8v11h-24z" fill="#3a4046"/><path d="M498 745h22l-11 7 6-2-2 3-15-8z" fill="#e9f3f6"/></svg>
  <svg class="active" width="48" height="40" viewBox="534 728 48 40"><path d="M547 738c0-1 1-2 2-2h15l4 2v21l-3 2h-16c-1 0-2-1-2-2z" fill="#e5104c"/><path d="M547 752h20v9h-18l-2-2z" fill="#7a0c2c"/><text x="557" y="749" class="logo-a">A</text><text x="557.500" y="759" class="logo-s">MEC</text><path d="M534 766h48v2h-48z" fill="#0078d7"/></svg>
  <div class="tray">
    <svg width="35" height="40" viewBox="890 728 35 40"><path d="M904 737a10.500 10.500 0 1012 14l-9-4z" fill="#f28a1b"/><path d="M904 737a10.500 10.500 0 00-8 15l12-4z" fill="#fbb42c"/><circle cx="911" cy="742" r="6" fill="#c42b1c"/><path d="M904 755a3.500 3.500 0 011-7 5 5 0 018-1 4 4 0 012 8z" fill="#a9d0f5"/><text x="911" y="745.500" class="badge">1</text></svg>
    <span class="temp">35°C</span><span class="cond">Mostly sunny</span>
    <svg width="168" height="40" viewBox="1045 728 168 40" fill="none" stroke="#111" stroke-width="1.200"><path d="M1070 751l5-5 5 5"/><rect x="1094.500" y="743.500" width="7" height="8" rx="2"/><path d="M1102 746l3-1v6l-3-1M1096 740.500q3-2 6 0M1096 755q3 2 6 0"/><path d="M1124 741l6-1v14h-6M1124 741h-7v11h9M1120 747l3-2M1121 749q4 0 5-4"/><circle cx="1128" cy="752" r="3.500" fill="#e81123" stroke="none"/><path d="M1144.500 745.500h9v7h-9M1155 747v4"/><path d="M1146 747h6v4h-6z" fill="#111"/><path d="M1139 742v3M1142 742v3M1138 745h5v3l-2 2h-1l-2-2z" fill="#111"/><circle cx="1171" cy="748" r="7"/><ellipse cx="1171" cy="748" rx="3" ry="7"/><path d="M1164 745.500h14M1164 750.500h14"/><circle cx="1175.500" cy="752" r="3.500" fill="#dce6ef"/><path d="M1173 754l5-4"/><path d="M1187 746v4h2l4 3v-10l-4 3zM1195 745.500q2 2.500 0 5"/><path d="M1198 743q3 5 0 10M1200.500 741.500q4 6 0 13" stroke="#999"/></svg>
    <span class="lang">ENG</span>
    <div class="clock"><span>14:38</span><span>07-06-2025</span></div>
    <svg width="58" height="40" viewBox="1308 728 58 40" fill="none" stroke="#111" stroke-width="1.300"><path d="M1325.500 741.500h15v11h-4l-3 4v-4h-8z"/><path d="M1361.500 728v40" stroke="#aab6c4"/></svg>
  </div>
</div>
</body>
</html>
```

FILE: styles.css
```css
* { box-sizing: border-box; }
body { margin: 0; width: 1366px; height: 768px; overflow: hidden; display: flex; flex-direction: column; background: linear-gradient(#fff 0 23px, #0067b8 23px 46px, #fff 46px); font: 11.4px/15px "Noto Sans", "Open Sans", sans-serif; color: #d4d6d9; }
svg { display: block; flex: none; }
.defs { position: absolute; }
.end { margin-left: auto; }
.window { margin: 0 1px 0 2px; width: 1363px; height: 728px; border: 1px solid #0a8fd0; background: #222933; display: flex; flex-direction: column; }
.titlebar { height: 33px; display: flex; padding-left: 3px; }
.winbtns { margin-right: 4px; }
.titlebar > span { line-height: 33px; white-space: nowrap; }
.workspace { width: 178px; height: 20px; margin-top: 7px; background: #3c4454; display: flex; color: #fff; line-height: 19px; font-size: 11.6px; }
.workspace span { flex: 1; }
.share { width: 53px; color: #7cc4ff; font-size: 11.3px; }
.titlebar > .doc-title { width: 76px; color: #fff; line-height: 30px; font-size: 11.3px; }
.search { width: 178px; height: 20px; margin-top: 7px; padding-left: 2px; background: #464e60; color: #b9bdc6; font-style: italic; line-height: 20px; font-size: 10.8px; white-space: nowrap; }
.user { width: 82px; color: #e4e4e4; font-size: 11.2px; }
.trial { width: 44px; height: 26px; margin-top: 4px; background: #6464fa; color: #eef; display: flex; line-height: 26px; }
.trial span { padding-left: 3px; font-size: 11.5px; }
.logo-a { font: bold 12px "Liberation Sans", sans-serif; fill: #fff; text-anchor: middle; }
.logo-m { font: bold 7px "Liberation Sans", sans-serif; fill: #fff; text-anchor: middle; }
.logo-s { font: bold 5px "Liberation Sans", sans-serif; fill: #fff; text-anchor: middle; }
.help { font: bold 12px "Noto Sans", sans-serif; fill: #222933; text-anchor: middle; }
.menubar { height: 19px; display: flex; gap: 24px; padding-left: 17px; border-bottom: 1px solid #3c4454; line-height: 18px; color: #c2c5ca; letter-spacing: -.07px; }
.tabs { height: 24px; padding: 4px 0 0 7px; display: flex; line-height: 20px; color: #c2c5ca; letter-spacing: -.08px; }
.tabs span { padding: 0 10px; }
.tabs .on { padding: 0 9px; background: #3c4454; color: #fff; margin-right: 1px; }
.tabs svg { margin-left: 18px; }
.ribbon { height: 99px; margin: 0 5px 0 4px; background: #3c4454; display: flex; color: #eceded; }
.panel { border-right: 1px solid #272d38; display: flex; flex-direction: column; }
.body { display: flex; height: 80px; }
.stack { flex-direction: column; }
.row { display: flex; padding-left: 2px; }
.stack .row:first-child { padding-top: 5px; }
.name { display: flex; justify-content: center; align-items: center; height: 17px; }
.p-draw { width: 231px; } .p-cons { width: 171px; } .p-det { width: 99px; } .p-mod { width: 129px; } .p-lay { width: 213px; } .p-ann { width: 111px; }
.big { display: flex; flex-direction: column; align-items: center; text-align: center; white-space: nowrap; }
.line { width: 50px; } .poly { width: 42px; } .circ { width: 58px; } .arc { width: 34px; }
.ray { width: 42px; margin-right: 6px; } .cline { width: 74px; } .hide { width: 53px; margin-left: 10px; margin-right: -1px; } .mtext { width: 54px; margin: 0 -2px 0 10px; }
.tools { padding-top: 5px; } .p-draw .tools { padding-left: 4px; }
.modgrid { display: grid; grid-template-columns: 36px 27px 36px 26px; grid-auto-rows: 24px; padding: 5px 0 0 2px; }
.combo { width: 207px; height: 22px; margin-left: 3px; background: #4e5b6f; border: 1px solid #272d38; display: flex; line-height: 20px; }
.combo span { padding-left: 2px; font-size: 11.6px; }
.stack .combo + .row { padding-top: 1px; }
.ic7 { font: bold 7px "Noto Sans", sans-serif; fill: #ddd; }
.mid { text-anchor: middle; }
.ic9 { font: 10px "Noto Sans", sans-serif; fill: #ddd; text-anchor: middle; }
.collapsed { display: flex; gap: 3px; padding: 2px 1px 2px; height: 99px; background: #272d38; width: 305px; }
.chip { width: 58px; background: #4e5b6f; display: flex; flex-direction: column; align-items: center; }
.chip svg:last-child { margin: auto 0 2px; }
.filetabs { height: 30px; margin: 0 3px; border-bottom: 4px solid #3c4454; display: flex; color: #eceded; line-height: 29px; }
.filetabs > svg:first-child { margin-left: -3px; }
.filetabs > span { width: 32px; letter-spacing: -.2px; }
.filetab { width: 104px; height: 24px; margin-top: 3px; padding-left: 16px; display: flex; line-height: 23px; color: #fff; background: #3c4454; clip-path: polygon(10px 0, 104px 0, 94px 100%, 0 100%); }
.filetab b { width: 65px; font-size: 11.2px; }
.canvas { position: relative; height: 485px; }
.drawing { position: absolute; left: 0; top: 0; }
.viewlabel { position: absolute; left: 6px; top: 8px; color: #e8e8e8; font-size: 11.6px; }
.dim { font: 24.9px "Liberation Sans", Arial, sans-serif; fill: #fff; }
.green { fill: #0f0; } .title { font-size: 70.5px; font-kerning: none; }
.cube { font: bold 14px "Liberation Sans", sans-serif; fill: #acaeb0; text-anchor: middle; }
.top { font: bold 10px "Noto Sans", sans-serif; fill: #4d5256; text-anchor: middle; }
.wcs { font: 10.5px "Liberation Sans", sans-serif; fill: #555863; }
.cmd { position: absolute; left: 299px; top: 401px; width: 762px; font: 11.63px/14px "DejaVu Sans Mono", monospace; }
.history { display: flex; flex-direction: column; align-items: flex-start; gap: 6px; padding-left: 62px; color: #434951; }
.history span { background: #2a3038; padding: 0 2px; border-radius: 2px; }
.cmdrow { display: flex; margin-top: 4px; }
.cmdtools { background: #2a2e3a; border-radius: 2px 0 0 2px; }
.cmdinput { flex: 1; height: 25px; background: #bebebf; display: flex; line-height: 25px; color: #555; }
.cmdinput i { padding-left: 4px; }
.activate { position: absolute; left: 1070px; top: 445px; color: #81858a; font-size: 19.1px; line-height: 22px; white-space: nowrap; z-index: 2; }
.activate p { margin: 1px 0 0; font-size: 14.3px; line-height: 21px; letter-spacing: -.02px; }
.status { height: 36px; border-top: 4px solid #3c4454; margin: 0 3px; display: flex; color: #eceded; line-height: 25px; }
.status > svg:first-child { margin-left: -3px; }
.model { width: 70px; height: 24px; background: #3c4454; color: #fff; text-align: center; font-size: 11.2px; clip-path: polygon(10px 0, 100% 0, 60px 100%, 0 100%); }
.lay { width: 66px; padding-left: 6px; letter-spacing: -.05px; background: linear-gradient(113deg, transparent 57px, #4e5666 57px 58px, transparent 58px) 0 0 / 66px 20px no-repeat; }
.lay.last { width: 63px; }
.toggles { display: flex; margin-left: auto; padding-top: 2px; height: 26px; margin-right: 3px; }
.mspace { width: 47px; margin-right: 4px; background: #3c4454; text-align: center; line-height: 23px; }
.sel { fill: #5b8abf; } .off { fill: #343c4a; }
.taskbar { height: 40px; display: flex; background: linear-gradient(90deg, #cfe7ef, #d2e6ee 60%, #d6dcea 85%, #d3d9e8); color: #111; }
.tsearch { width: 288px; height: 39px; background: #fff; border: 1px solid #c3c9cc; display: flex; line-height: 38px; font-size: 13.95px; color: #333; }
.active { background: #eef6fa; }
.tray { margin-left: auto; display: flex; line-height: 39px; font-size: 13.2px; white-space: nowrap; }
.temp { width: 38px; } .cond { width: 82px; } .lang { width: 36px; font-size: 11.4px; }
.clock { width: 59px; display: flex; flex-direction: column; align-items: center; font-size: 11.2px; line-height: 18px; padding-top: 2px; }
.badge { font: bold 9px "Noto Sans", sans-serif; fill: #fff; text-anchor: middle; }
```
